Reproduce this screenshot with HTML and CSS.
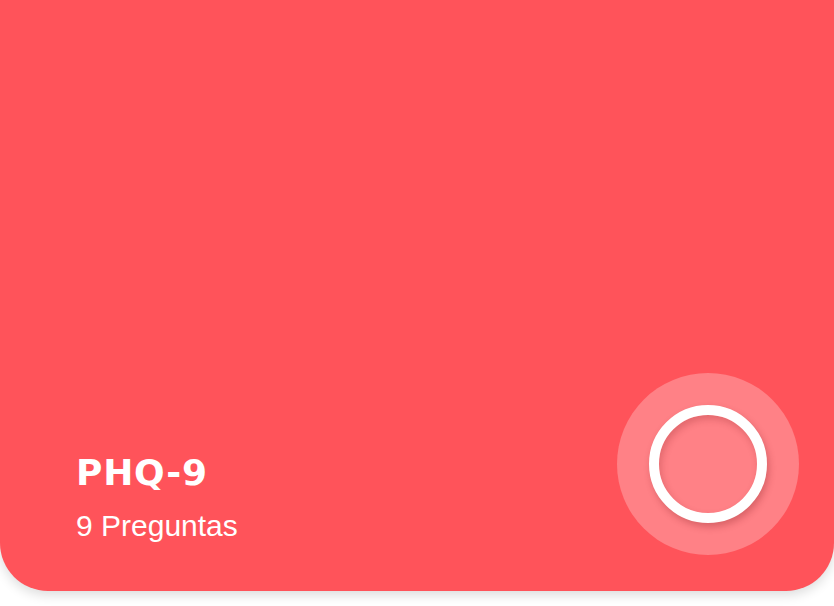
FILE: index.html
```html
<!DOCTYPE html>
<html lang="es">
<head>
<meta charset="utf-8">
<title>PHQ-9</title>
<link rel="stylesheet" href="styles.css">
</head>
<body>
  <div class="card">
    <div class="info">
      <h1 class="title">PHQ-9</h1>
      <p class="subtitle">9 Preguntas</p>
    </div>
    <div class="halo">
      <div class="ring"></div>
    </div>
  </div>
</body>
</html>
```
FILE: styles.css
```css
html, body {
  margin: 0;
  padding: 0;
  background: #ffffff;
}
body {
  width: 834px;
  height: 606px;
  overflow: hidden;
  font-family: "Liberation Sans", Arial, sans-serif;
}
.card {
  box-sizing: border-box;
  width: 834px;
  height: 591px;
  background: #ff535a;
  border-radius: 0 0 48px 48px;
  box-shadow: 0 4px 12px rgba(0, 0, 0, 0.14);
  display: flex;
  justify-content: space-between;
  align-items: flex-end;
  padding: 0 35px 36px 76px;
}
.info {
  color: #ffffff;
  padding-bottom: 12px;
}
.title {
  margin: 0;
  font-family: "DejaVu Sans", "Liberation Sans", sans-serif;
  font-size: 36px;
  font-weight: 700;
  letter-spacing: 0.8px;
  line-height: 40px;
}
.subtitle {
  margin: 16px 0 0;
  font-size: 30px;
  font-weight: 400;
  letter-spacing: 0;
  line-height: 34px;
}
.halo {
  width: 182px;
  height: 182px;
  border-radius: 50%;
  background: #ff8186;
  display: flex;
  align-items: center;
  justify-content: center;
}
.ring {
  box-sizing: border-box;
  width: 118px;
  height: 118px;
  border-radius: 50%;
  border: 10px solid #ffffff;
  background: #ff8186;
  box-shadow: 2px 4px 7px rgba(120, 20, 25, 0.28), inset 2px 4px 7px rgba(120, 20, 25, 0.22);
}
```
